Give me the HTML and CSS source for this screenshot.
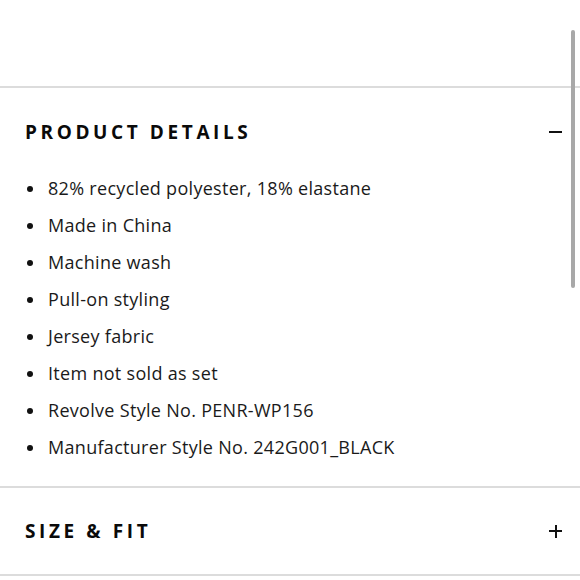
FILE: index.html
```
<!DOCTYPE html>
<html>
<head>
<meta charset="utf-8">
<link rel="stylesheet" href="styles.css">
</head>
<body>
<div class="page">
  <div class="spacer"></div>
  <section class="acc acc-open">
    <div class="acc-head acc-head-open">
      <h2 class="acc-title">PRODUCT DETAILS</h2>
      <span class="icon-minus"></span>
    </div>
    <ul class="details">
      <li>82% recycled polyester, 18% elastane</li>
      <li>Made in China</li>
      <li>Machine wash</li>
      <li>Pull-on styling</li>
      <li>Jersey fabric</li>
      <li>Item not sold as set</li>
      <li>Revolve Style No. PENR-WP156</li>
      <li>Manufacturer Style No. 242G001_BLACK</li>
    </ul>
  </section>
  <section class="acc acc-closed">
    <div class="acc-head acc-head-closed">
      <h2 class="acc-title">SIZE &amp; FIT</h2>
      <span class="icon-plus"></span>
    </div>
  </section>
  <div class="scrollbar"></div>
</div>
</body>
</html>
```
FILE: styles.css
```
html, body {
  margin: 0;
  padding: 0;
  background: #ffffff;
}
body {
  font-family: "Open Sans", "Liberation Sans", sans-serif;
  color: #111;
  width: 580px;
  height: 580px;
  overflow: hidden;
}
.page {
  position: relative;
  width: 580px;
  height: 580px;
}
.spacer {
  height: 86px;
}
.acc {
  border-top: 2px solid #dcdcdc;
}
.acc-closed {
  border-bottom: 2px solid #dcdcdc;
}
.acc-head {
  box-sizing: border-box;
  display: flex;
  align-items: center;
  justify-content: space-between;
  padding: 0 18px 0 25px;
}
.acc-head-open {
  height: 82px;
  padding-top: 5px;
}
.acc-head-closed {
  height: 86px;
}
.acc-title {
  margin: 0;
  font-size: 19px;
  font-weight: 700;
  letter-spacing: 3.6px;
  color: #0a0a0a;
}
.icon-minus {
  width: 13px;
  height: 2px;
  background: #111;
}
.icon-plus {
  position: relative;
  width: 13px;
  height: 13px;
}
.icon-plus::before,
.icon-plus::after {
  content: "";
  position: absolute;
  background: #111;
}
.icon-plus::before {
  left: 0;
  top: 5.5px;
  width: 13px;
  height: 2px;
}
.icon-plus::after {
  left: 5.5px;
  top: 0;
  width: 2px;
  height: 13px;
}
.details {
  list-style: none;
  margin: 0;
  padding: 0 0 20px 48px;
}
.details li {
  position: relative;
  font-size: 18px;
  letter-spacing: 0.3px;
  line-height: 37px;
  color: #1a1a1a;
}
.details li::before {
  content: "";
  position: absolute;
  left: -21px;
  top: 16px;
  width: 6px;
  height: 6px;
  border-radius: 50%;
  background: #111;
}
.scrollbar {
  position: absolute;
  left: 571px;
  top: 30px;
  width: 4px;
  height: 258px;
  border-radius: 2px;
  background: #a8a8a8;
}
```
